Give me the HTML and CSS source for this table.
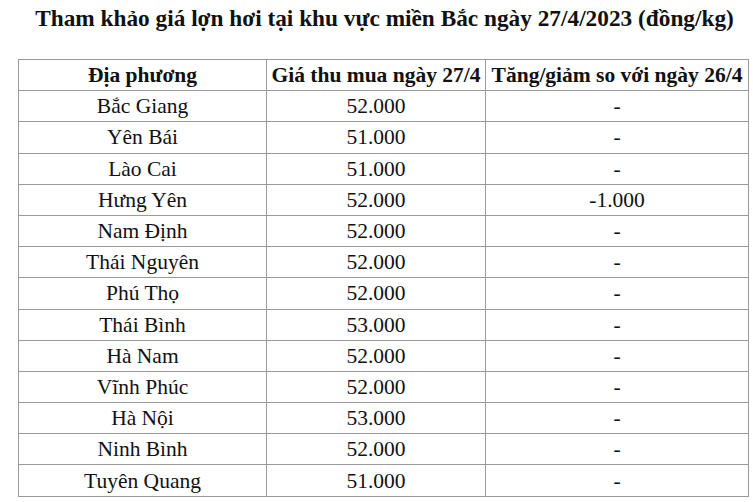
FILE: index.html
```html
<!DOCTYPE html>
<html lang="vi">
<head>
<meta charset="utf-8">
<title>Giá lợn hơi</title>
<link rel="stylesheet" href="styles.css">
</head>
<body>
<div class="page">
  <h1 class="title">Tham khảo giá lợn hơi tại khu vực miền Bắc ngày 27/4/2023 (đồng/kg)</h1>
  <table class="prices">
    <thead>
      <tr><th class="c1">Địa phương</th><th class="c2">Giá thu mua ngày 27/4</th><th class="c3">Tăng/giảm so với ngày 26/4</th></tr>
    </thead>
    <tbody>
      <tr><td>Bắc Giang</td><td>52.000</td><td>-</td></tr>
      <tr><td>Yên Bái</td><td>51.000</td><td>-</td></tr>
      <tr><td>Lào Cai</td><td>51.000</td><td>-</td></tr>
      <tr><td>Hưng Yên</td><td>52.000</td><td>-1.000</td></tr>
      <tr><td>Nam Định</td><td>52.000</td><td>-</td></tr>
      <tr><td>Thái Nguyên</td><td>52.000</td><td>-</td></tr>
      <tr><td>Phú Thọ</td><td>52.000</td><td>-</td></tr>
      <tr><td>Thái Bình</td><td>53.000</td><td>-</td></tr>
      <tr><td>Hà Nam</td><td>52.000</td><td>-</td></tr>
      <tr><td>Vĩnh Phúc</td><td>52.000</td><td>-</td></tr>
      <tr><td>Hà Nội</td><td>53.000</td><td>-</td></tr>
      <tr><td>Ninh Bình</td><td>52.000</td><td>-</td></tr>
      <tr><td>Tuyên Quang</td><td>51.000</td><td>-</td></tr>
    </tbody>
  </table>
</div>
</body>
</html>
```
FILE: styles.css
```css
html, body {
  margin: 0;
  padding: 0;
  background: #ffffff;
}
.page {
  padding: 4px 8px 0 18px;
  font-family: "Liberation Serif", "Times New Roman", serif;
  color: #111111;
}
.title {
  margin: 0;
  width: 733px;
  text-align: center;
  font-size: 23.3px;
  font-weight: bold;
  line-height: 28px;
}
.prices {
  margin-top: 27px;
  border-collapse: collapse;
  width: 727px;
  table-layout: fixed;
  font-size: 21.5px;
}
.prices th, .prices td {
  border: 1px solid #9a9a9a;
  text-align: center;
  padding: 0;
  height: 30.2px;
  line-height: 24px;
  vertical-align: middle;
}
.prices th {
  font-weight: bold;
}
.c1 { width: 247px; }
.c2 { width: 218px; }
.c3 { width: 262px; }
```
